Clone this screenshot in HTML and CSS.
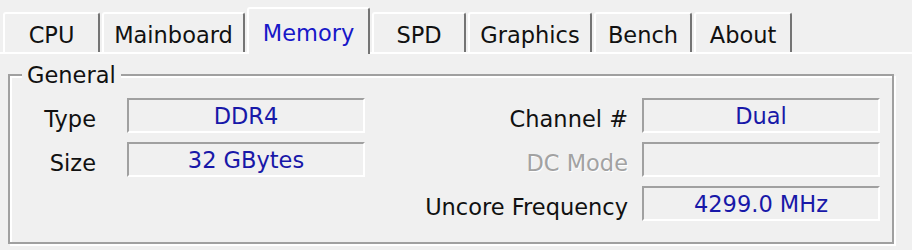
FILE: index.html
```html
<!DOCTYPE html>
<html lang="en">
<head>
    <meta charset="UTF-8">
    <meta name="viewport" content="width=device-width, initial-scale=1.0">
    <title>CPU-Z Memory</title>
    <link rel="stylesheet" href="styles.css">
</head>
<body>
    <div class="tabs">
        <div class="tab tab-cpu">CPU</div>
        <div class="tab tab-mainboard">Mainboard</div>
        <div class="tab tab-memory selected">Memory</div>
        <div class="tab tab-spd">SPD</div>
        <div class="tab tab-graphics">Graphics</div>
        <div class="tab tab-bench">Bench</div>
        <div class="tab tab-about">About</div>
    </div>
    <div class="panel">
        <fieldset class="group">
            <legend>General</legend>
            <div class="fields">
                <span class="label label-left">Type</span>
                <span class="value">DDR4</span>
                <span class="label label-right">Channel #</span>
                <span class="value">Dual</span>

                <span class="label label-left">Size</span>
                <span class="value">32 GBytes</span>
                <span class="label label-right disabled">DC Mode</span>
                <span class="value"></span>

                <span></span>
                <span></span>
                <span class="label label-right">Uncore Frequency</span>
                <span class="value">4299.0 MHz</span>
            </div>
        </fieldset>
    </div>
</body>
</html>
```

FILE: styles.css
```css
body {
    margin: 0;
    padding: 0;
    background-color: #f0f0f0;
    font-family: "DejaVu Sans", Verdana, sans-serif;
    font-size: 22.5px;
    color: #111;
    width: 912px;
    height: 250px;
    overflow: hidden;
}
.tabs {
    display: flex;
    align-items: flex-end;
    gap: 2px;
    height: 52px;
    padding-left: 3px;
}
.tab {
    box-sizing: border-box;
    height: 40px;
    padding-top: 8px;
    line-height: 26px;
    text-align: center;
    background: #f0f0f0;
    border-top: 2px solid #fff;
    border-left: 2px solid #fff;
    border-right: 2px solid #747474;
    border-radius: 3px 3px 0 0;
    white-space: nowrap;
}
.tab.selected {
    position: relative;
    z-index: 1;
    height: 47px;
    margin-bottom: -2px;
    padding-top: 11px;
    color: #1717c8;
}
.tab-cpu { width: 97px; }
.tab-mainboard { width: 143px; }
.tab-memory { width: 123px; }
.tab-spd { width: 94px; }
.tab-graphics { width: 124px; }
.tab-bench { width: 98px; }
.tab-about { width: 98px; }
.panel {
    border-top: 2px solid #fff;
    padding: 8px 18px 0 8px;
}
.group {
    margin: 0;
    padding: 10px 12px 21px 12px;
    border: 2px solid #a0a0a0;
    box-shadow: inset 2px 2px 0 #fff, 2px 2px 0 #fff;
}
.group legend {
    padding: 0 5px;
    line-height: 26px;
    background: #f0f0f0;
}
.fields {
    display: grid;
    grid-template-columns: 105px 238px 277px 238px;
    grid-auto-rows: 35px;
    row-gap: 9px;
}
.label {
    text-align: right;
    line-height: 35px;
    padding-top: 4px;
    white-space: nowrap;
}
.label-left {
    padding-right: 31px;
}
.label-right {
    padding-right: 14px;
}
.label.disabled {
    color: #a2a2a2;
    text-shadow: 1px 1px 0 #fff;
}
.value {
    box-sizing: border-box;
    height: 35px;
    line-height: 33px;
    text-align: center;
    color: #1818a8;
    border-top: 2px solid #a0a0a0;
    border-left: 2px solid #a0a0a0;
    border-bottom: 2px solid #fff;
    border-right: 2px solid #fff;
    overflow: hidden;
    white-space: nowrap;
}
```
